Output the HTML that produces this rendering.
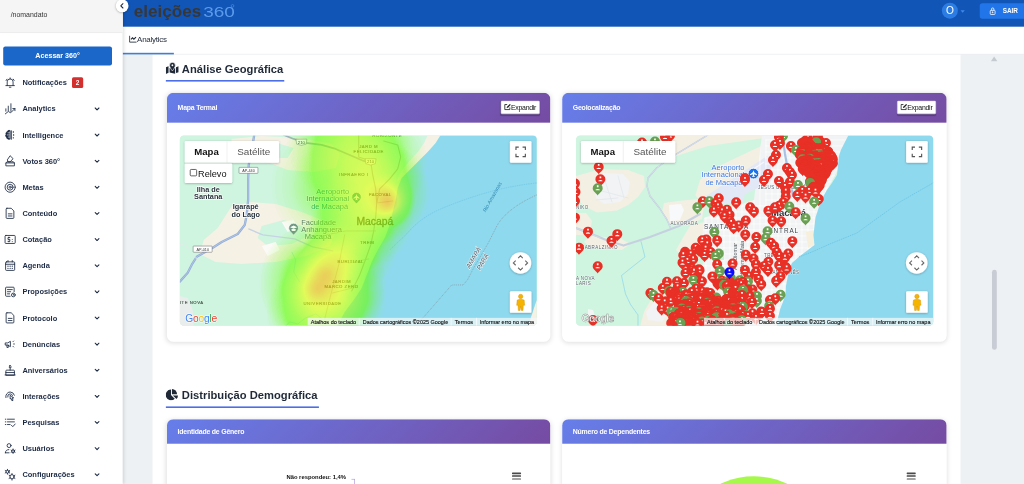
<!DOCTYPE html>
<html lang="pt-BR">
<head>
<meta charset="utf-8">
<title>Eleições 360 - Analytics</title>
<style>
*{box-sizing:border-box;margin:0;padding:0}
html,body{width:1024px;height:484px;overflow:hidden;background:#fff}
body{font-family:"Liberation Sans",Arial,sans-serif;color:#1f2937}
#root{position:absolute;left:0;top:0;width:1920px;height:908px;transform:scale(0.533333);transform-origin:0 0;overflow:hidden;background:#eef1f4}
/* sidebar */
#side{position:absolute;left:0;top:0;width:230px;height:908px;background:#fff;box-shadow:2px 0 6px rgba(0,0,0,.12);z-index:5}
#side .top{height:62px;background:#f5f5f5;border-bottom:1px solid #e4e4e4;font-size:13px;color:#333;padding:20px 0 0 20px}
#side .btn{position:absolute;left:6px;top:86.800px;width:204px;height:36px;background:#1b67c9;border-radius:4px;color:#fff;font-weight:700;font-size:13.400px;text-align:center;line-height:36px}
#side .it{position:absolute;left:0;width:230px;height:30px;font-size:14px;font-weight:700;color:#1c2a44;line-height:30px}
#side .it .tx{position:absolute;left:42px;top:0;white-space:nowrap}
#side .it svg.ic{position:absolute;left:7px;top:3px;width:24px;height:24px;fill:none;stroke:#1c2a44;stroke-width:1.6;stroke-linecap:round;stroke-linejoin:round}
#side .it svg.ch{position:absolute;left:176px;top:9px;width:12px;height:12px;fill:none;stroke:#1c2a44;stroke-width:2;stroke-linecap:round;stroke-linejoin:round}
#side .badge{position:absolute;left:135px;top:5px;width:21px;height:20px;background:#d32f2f;border-radius:3px;color:#fff;font-size:12px;line-height:20px;text-align:center}
#collapse{position:absolute;left:217px;top:-1px;width:24px;height:24px;border-radius:50%;background:#fff;box-shadow:0 1px 4px rgba(0,0,0,.3);z-index:9}
#collapse svg{position:absolute;left:6px;top:6px;width:12px;height:12px;fill:none;stroke:#1c2a44;stroke-width:2;stroke-linecap:round;stroke-linejoin:round}
/* header */
#hdr{position:absolute;left:230px;top:0;width:1690px;height:50px;background:#1155b7;z-index:2}
#logo{position:absolute;left:21px;top:0.500px;font-size:32px;font-weight:700;color:#373737;line-height:40px;white-space:nowrap}
#logo span{display:inline-block;color:#5b9bea;font-weight:400;font-size:28px;margin-left:4px;transform:scaleX(1.27);transform-origin:0 50%}
#logo i{position:absolute;left:182px;top:7.500px;width:6px;height:6px;border:1.200px solid #5b9bea;border-radius:50%}
#avatar{position:absolute;left:1536px;top:5px;width:30px;height:30px;border-radius:50%;background:#2b7de4;color:#fff;font-size:19px;text-align:center;line-height:31px}
#caret{position:absolute;left:1570.500px;top:19px;width:0;height:0;border-left:4px solid transparent;border-right:4px solid transparent;border-top:5px solid #3b8af0}
#sair{position:absolute;left:1607px;top:6px;width:90px;height:29px;border-radius:5px 0 0 5px;background:#2275e8;color:#fff;font-weight:700;font-size:12px;line-height:29px;padding-left:43px}
#sair svg{position:absolute;left:17px;top:6.500px;width:14.500px;height:15.500px;fill:none;stroke:#fff;stroke-width:1.6}
/* tabs */
#tabs{position:absolute;left:230px;top:50px;width:1690px;height:52px;background:#fff;border-bottom:1.500px solid #dfe3e8;z-index:1}
#tab{position:absolute;left:0;top:0;width:96px;height:52px;border-bottom:3px solid #3f7fd6;font-size:15px;color:#1f2937;letter-spacing:-0.5px;line-height:47px;padding-left:27px}
#tab svg{position:absolute;left:12px;top:16px;width:15px;height:15px;fill:none;stroke:#1f2937;stroke-width:1.6}
/* content */
#panel{position:absolute;left:286px;top:101px;width:1515px;height:820px;background:#fff}
.sec{position:absolute;left:25px;font-size:21px;font-weight:700;color:#1f2937;height:41px;line-height:34px;border-bottom:3px solid #4d6fe6;padding-left:30px;white-space:nowrap}
.sec svg{position:absolute;left:0;top:5px;width:26px;height:22px;fill:#1f2937}
.card{position:absolute;width:719px;background:#fff;border-radius:12px;box-shadow:0 2px 10px rgba(0,0,0,.13);overflow:hidden}
.card .ch{height:56px;background:linear-gradient(135deg,#667eea 0%,#764ba2 100%);color:#fff;font-size:13px;font-weight:700;line-height:57.500px;padding-left:20px;letter-spacing:-0.4px}
.exp{position:absolute;right:20px;top:15px;width:73px;height:25px;background:#fff;border:1px solid #d8d8e0;border-radius:2px;color:#111;font-size:13px;font-weight:400;line-height:23px;padding-left:18px;letter-spacing:-0.5px;box-shadow:0 2px 2px rgba(0,0,0,.25)}
.exp svg{position:absolute;left:5px;top:4px;width:13px;height:13px;fill:none;stroke:#222;stroke-width:1.6}
.map{position:absolute;left:24px;top:80px;width:670px;height:356.600px;border-radius:8px;overflow:hidden;background:#cdf3e0}
.card .ch.sm{height:46px;line-height:46px}
.lbl{position:absolute;font-size:11px;font-weight:700;color:#111;white-space:nowrap;line-height:14px}
.conn{position:absolute;left:346px;top:112px;width:6px;height:20px;border-top:1.500px solid #9a7fd6;border-right:1.500px solid #9a7fd6}
.hb{position:absolute;width:17px;height:14px}
.hb i{display:block;height:2.600px;background:#4a4a4a;margin-bottom:2.800px;border-radius:1px}
.pie{position:absolute;left:214px;top:107px;width:291px;height:291px;border-radius:50%;background:#a6f94b}
#sb{position:absolute;left:1859.500px;top:506px;width:9px;height:150px;border-radius:4.500px;background:#c8ccd4}
#sbt{position:absolute;left:1858px;top:106px;width:0;height:0;border-left:6px solid transparent;border-right:6px solid transparent;border-bottom:9px solid #c5cad1}
</style>
</head>
<body>
<div id="root">

<div id="hdr">
  <div id="logo">eleições<span>360</span><i></i></div>
  <div id="avatar">O</div><div id="caret"></div>
  <div id="sair"><svg viewBox="0 0 16 17"><rect x="3" y="7" width="10" height="8.5" rx="1.5"/><path d="M5.5 7V4.5a2.5 2.5 0 0 1 5 0V7"/><circle cx="8" cy="11" r="1" fill="#fff"/></svg>SAIR</div>
</div>

<div id="tabs">
  <div id="tab"><svg viewBox="0 0 15 15"><path d="M1 1v12h13"/><path d="M3.5 8l3-3 2.5 2.5 4-4" stroke-width="2"/></svg>Analytics</div>
</div>

<div id="panel">
  <div class="sec" style="top:11px;width:222px"><svg viewBox="0 0 24 22" style="width:24px;height:22px;top:4.500px"><path d="M0 8.900L5 7.300V19.300L0 21.700zM19 8.900L24 7.300V18.300L19 19.900zM7 10.500V19L17.400 21.300V10.500z"/><path d="M12.250 16C9.300 12.200 6.850 8.600 6.850 5.200A5.400 5.400 0 0 1 17.650 5.200C17.650 8.600 15.200 12.200 12.250 16z" stroke="#fff" stroke-width="1.200"/><circle cx="12.250" cy="5.300" r="1.700" fill="#fff"/></svg>Análise Geográfica</div>

  <div class="card" id="c1" style="left:27px;top:73px;height:467px">
    <div class="ch">Mapa Termal</div>
    <div class="exp"><svg viewBox="0 0 13 13"><path d="M11 7.500V11.500H1.500V2H6"/><path d="M5 8.500l.5-2.500L11 0.800l1.800 1.800L7.500 8z" fill="#222" stroke="none"/></svg>Expandir</div>
    <div class="map" id="m1"><svg width="670" height="356.600" viewBox="0 0 357.4 190.2" preserveAspectRatio="none" style="display:block"><defs>
<filter id="sh" x="-20%" y="-20%" width="140%" height="150%"><feDropShadow dx="0" dy="0.600" stdDeviation="0.900" flood-color="#000" flood-opacity="0.300"/></filter>
<filter id="heat" x="0" y="0" width="100%" height="100%" filterUnits="objectBoundingBox" color-interpolation-filters="sRGB">
<feColorMatrix type="matrix" values="0 0 0 1 0  0 0 0 1 0  0 0 0 1 0  0 0 0 1 0"/>
<feComponentTransfer>
<feFuncR type="table" tableValues="0.400 0.400 0.576 0.757 0.933 0.957 0.976 1 1 1 1"/>
<feFuncG type="table" tableValues="1 1 1 1 1 0.890 0.776 0.667 0.443 0.224 0"/>
<feFuncB type="table" tableValues="0 0 0 0 0 0 0 0 0 0 0"/>
<feFuncA type="table" tableValues="0 0.600 0.600 0.600 0.600 0.600 0.600 0.600 0.600 0.600 0.600"/>
</feComponentTransfer>
</filter>
<radialGradient id="hb"><stop offset="0" stop-color="#000" stop-opacity="1"/><stop offset="0.350" stop-color="#000" stop-opacity="0.620"/><stop offset="0.700" stop-color="#000" stop-opacity="0.180"/><stop offset="1" stop-color="#000" stop-opacity="0"/></radialGradient>
</defs><g transform="translate(-180.0,-135.5)"><rect x="180" y="135" width="358" height="192" fill="#cff5e0"/><g fill="#f5f1e5"><path d="M232 139l30-3 40 2 30 6 8 10-4 14-22 4-26-2-20-8-24-6-14-8z"/><path d="M232 206l20-4 24 2 26 8 20 8 14 12-6 14-24 10-30 6-34 2-26-2-16-8 4-14 14-12z"/><path d="M428 135h13l-5 8-8 9-8 8-10 10-8 8-5 4 4-10 9-11 9-10 6-9z"/><path d="M531 318l6-18v26h-9z"/></g><g fill="#cff5e0"><path d="M262 226l22-6 18 6 6 10-16 8-24 2-10-8z"/><path d="M250 146l24-4 20 6-6 10-24 0z"/></g><g fill="#e9eeec"><path d="M180 296l8 2 5 12 1 18h-14z"/><path d="M282 222l12-2 4 8-10 4z" fill="#fbfaf6"/><path d="M262 246l14-4 4 8-12 6z" fill="#fbfaf6"/></g><path d="M441 135L436 143 428 152 420 160 410 170 402 178 398 188 396 200 393 212 390 225 385 238 378 250 372 262 367 275 362 288 354 300 345 312 337 327H529L531 318 537 300V135z" fill="#8fd9ee"/><path d="M340 326l-6-8-10 2-8-6-10 4-8 6-8-2-10 10" fill="none" stroke="#9ddcf0" stroke-width="0.700"/><path d="M292 252l4 8-2 12 6 10" fill="none" stroke="#9ddcf0" stroke-width="0.600"/><g fill="none" stroke-linecap="round" stroke-linejoin="round"><path d="M254.500 135L252 150 249 165 248.400 180V200L247 215 245 225 238 234 222 242 213 247.700 197 256.800 192.700 263.600 188 272.700 180 281.800" stroke="#93add8" stroke-width="2.300"/><path d="M254.500 135L252 150 249 165 248.400 180V200L247 215 245 225 238 234 222 242 213 247.700 197 256.800 192.700 263.600 188 272.700 180 281.800" stroke="#c4d3ec" stroke-width="0.600"/><path d="M284 135l10 4 12 4 16 2 14 4 14 6 14 6 8 2" stroke="#9fb4bc" stroke-width="1.800"/><path d="M249 229l14 6 16 2 16 2 18 8 20 4" stroke="#c5d3e4" stroke-width="1.300"/><path d="M359 135v22l12 4M371 161l2 14 3 14 1 14-1 14-2 14-3 14-5 14-6 16-8 16" stroke="#a8b8ac" stroke-width="1.100"/><path d="M384 141l14 4 3 12-3 12-8 10-10 10-3 14" stroke="#a8b8ac" stroke-width="1.100"/><path d="M377 203l16-2M376 231h-30l-20 4M345 235l-6 30-8 30-6 24M369 259l-20 4M357 287l-24 6" stroke="#b4c2b6" stroke-width="0.800"/><path d="M188 245l-8 -8M200 262l-14 -16-6-2" stroke="#e4e8ea" stroke-width="0.800"/></g><path d="M537 183Q510 186 486 193T441 209T407 234L390 250" fill="none" stroke="#62bfe0" stroke-width="0.500" stroke-dasharray="1.500 0.800"/><path d="M537 195Q508 208 497.700 225L488.600 243 474 268 468 279.500 463.600 285H452L425 316 415 326" fill="none" stroke="#80858f" stroke-width="0.600" stroke-dasharray="0.900 1"/><g font-family="Liberation Sans, Arial, sans-serif" text-anchor="middle"><g font-size="7.300" font-weight="700" fill="#27323a" stroke="#fff" stroke-width="1.300" paint-order="stroke" stroke-linejoin="round"><text x="208.500" y="191.600">Ilha de</text><text x="208.500" y="199.200">Santana</text><text x="246" y="209">Igarapé</text><text x="246" y="216.600">do Lago</text></g><g font-size="7.500" fill="#0f7c8c" stroke="#fff" stroke-width="1.100" stroke-opacity="0.750" paint-order="stroke" text-anchor="end"><text x="349.500" y="194">Aeroporto</text><text x="349.500" y="201.500">Internacional</text><text x="348.500" y="208.800">de Macapá</text></g><g font-size="7.500" fill="#5c6a70" stroke="#fff" stroke-width="1.100" stroke-opacity="0.750" paint-order="stroke" text-anchor="start"><text x="301.500" y="224.600">Faculdade</text><text x="301.500" y="232.100">Anhanguera</text><text x="305" y="239.300">Macapá</text></g><text x="375.200" y="224.600" font-size="10.400" fill="#434f3c" stroke="#434f3c" stroke-width="0.300">Macapá</text><g font-size="4.300" fill="#4c5a50" stroke="#4c5a50" stroke-width="0.150" letter-spacing="0.500"><text x="387.500" y="137">HORIZONTE</text><text x="369" y="148.500">JARD M</text><text x="369" y="153.400">FELICIDADE</text><text x="354" y="176.500">INFRAERO I</text><text x="380.500" y="196.500">PACOVAL</text><text x="367.500" y="244">TREM</text><text x="351" y="263">BURITIZAL</text><text x="342" y="283.300">JARDIM</text><text x="341.800" y="288.300">MARCO ZERO</text><text x="322.800" y="305.500">UNIVERSIDADE</text><text x="192" y="304.200">ITE NOVA</text></g><text transform="translate(486,212.500) rotate(-61)" font-size="5.200" font-style="italic" fill="#2e86b0" text-anchor="start">Rio Amazonas</text><g font-size="6.600" font-style="italic" fill="#525a62" stroke="#fff" stroke-width="1" stroke-opacity="0.850" paint-order="stroke" text-anchor="start"><text transform="translate(470,269) rotate(-60)">AMAPÁ</text><text transform="translate(480.500,270.500) rotate(-60)">PARÁ</text></g></g><g><path d="M352 197.200a4.800 4.800 0 1 1 9.600 0c0 2.700-3 4.500-4.800 6.800-1.800-2.300-4.800-4.100-4.800-6.800z" fill="#2a9d8a" stroke="#fff" stroke-width="0.700"/><path transform="translate(356.800,197.200) scale(0.900)" d="M0-3.400L.7-1.200 3.400.8V1.700L.7.800.6 2.400 1.400 3V3.500L0 3.100-1.400 3.500V3L-.6 2.400-.7.800-3.400 1.700V.8L-.7-1.200z" fill="#fff"/><path d="M289 228.200a4.900 4.900 0 1 1 9.800 0c0 2.800-3 4.600-4.900 7-1.900-2.400-4.900-4.200-4.900-7z" fill="#71918c" stroke="#fff" stroke-width="0.700"/><path d="M290.400 227.200l3.500-1.600 3.500 1.600-3.500 1.600zM291.800 229v1.500q2.100 1.200 4.200 0V229" fill="#fff"/></g><g font-family="Liberation Sans, Arial, sans-serif" font-size="3.800" text-anchor="middle" fill="#333"><rect x="239.300" y="167.400" width="18.900" height="6" rx="0.600" fill="#fff" stroke="#555" stroke-width="0.450"/><text x="248.800" y="171.800">AP-440</text><rect x="193.400" y="246.100" width="19" height="6.200" rx="0.600" fill="#fff" stroke="#555" stroke-width="0.450"/><text x="203" y="250.600">AP-010</text><path d="M296.200 139.200h11l-.8 5q-4.700 2.400-9.400 0z" fill="#fff" stroke="#666" stroke-width="0.450"/><text x="301.700" y="143.600" font-size="4.300">210</text><path d="M365.400 158.800h11l-.8 5q-4.700 2.400-9.400 0z" fill="#fff" stroke="#666" stroke-width="0.450"/><text x="370.900" y="163.200" font-size="4.300">210</text></g><g filter="url(#heat)"><rect x="180" y="135" width="358" height="192" fill="#000" fill-opacity="0"/><circle cx="350" cy="140" r="64" fill="url(#hb)" fill-opacity="0.18"/><circle cx="368" cy="162" r="60" fill="url(#hb)" fill-opacity="0.2"/><circle cx="338" cy="185" r="68" fill="url(#hb)" fill-opacity="0.13"/><circle cx="378" cy="192" r="52" fill="url(#hb)" fill-opacity="0.24"/><circle cx="388" cy="201" r="28" fill="url(#hb)" fill-opacity="0.36"/><circle cx="388" cy="203" r="15" fill="url(#hb)" fill-opacity="0.34"/><circle cx="387" cy="194" r="14" fill="url(#hb)" fill-opacity="0.12"/><circle cx="362" cy="218" r="52" fill="url(#hb)" fill-opacity="0.2"/><circle cx="350" cy="246" r="48" fill="url(#hb)" fill-opacity="0.18"/><circle cx="338" cy="260" r="36" fill="url(#hb)" fill-opacity="0.18"/><circle cx="323" cy="283" r="64" fill="url(#hb)" fill-opacity="0.3"/><circle cx="328" cy="271" r="34" fill="url(#hb)" fill-opacity="0.26"/><circle cx="318" cy="289" r="34" fill="url(#hb)" fill-opacity="0.28"/><circle cx="325" cy="276" r="15" fill="url(#hb)" fill-opacity="0.22"/><circle cx="317" cy="289" r="15" fill="url(#hb)" fill-opacity="0.24"/><circle cx="316" cy="314" r="50" fill="url(#hb)" fill-opacity="0.2"/><circle cx="345" cy="300" r="42" fill="url(#hb)" fill-opacity="0.14"/></g></g><text x="5.500" y="186.200" font-family="Liberation Sans, Arial, sans-serif" font-size="10.300" font-weight="400" letter-spacing="-0.250" stroke="#fff" stroke-width="1.300" stroke-opacity="0.700" paint-order="stroke" stroke-linejoin="round"><tspan fill="#4285f4">G</tspan><tspan fill="#ea4335">o</tspan><tspan fill="#fbbc05">o</tspan><tspan fill="#4285f4">g</tspan><tspan fill="#34a853">l</tspan><tspan fill="#ea4335">e</tspan></text><g font-family="Liberation Sans, Arial, sans-serif"><rect x="5" y="5.600" width="94.300" height="21.600" rx="1.200" fill="#fff" filter="url(#sh)"/><line x1="47.300" y1="5.600" x2="47.300" y2="27.200" stroke="#e6e6e6" stroke-width="0.600"/><text x="26.800" y="20" font-size="9.600" font-weight="700" fill="#111" text-anchor="middle" textLength="24.500" lengthAdjust="spacingAndGlyphs">Mapa</text><text x="74" y="20" font-size="9.600" fill="#565656" text-anchor="middle" textLength="33" lengthAdjust="spacingAndGlyphs">Satélite</text><rect x="5" y="28" width="47.500" height="19.500" rx="1.200" fill="#fff" filter="url(#sh)"/><rect x="10.500" y="34" width="6.400" height="6.400" rx="1" fill="#fff" stroke="#222" stroke-width="0.700"/><text x="18.300" y="41.300" font-size="9.600" fill="#111" textLength="28.500" lengthAdjust="spacingAndGlyphs">Relevo</text><rect x="330.200" y="5.600" width="21.600" height="21.600" rx="1.200" fill="#fff" filter="url(#sh)"/><path d="M336.300 14.500v-2.800h2.800M342.900 11.700h2.800v2.800M345.700 18.400v2.800h-2.800M339.100 21.200h-2.800v-2.800" fill="none" stroke="#555" stroke-width="1.150"/><circle cx="340.800" cy="127.500" r="10.800" fill="#fff" filter="url(#sh)"/><path d="M338.500 122.700l2.300-2.300 2.300 2.300M338.500 132.300l2.300 2.300 2.300-2.300M336 125.200l-2.300 2.300 2.300 2.300M345.600 125.200l2.300 2.300-2.300 2.300" fill="none" stroke="#666" stroke-width="1.100"/><rect x="330.200" y="155.800" width="21.600" height="21.600" rx="1.200" fill="#fff" filter="url(#sh)"/><g fill="#f5b400" stroke="#d48e00" stroke-width="0.400"><circle cx="341" cy="161" r="2.200"/><path d="M337.500 164.600q3.500-1.600 7 0l.5 5.200h-1.300l-.4 5.200h-1.700l-.6-4.200-.6 4.200h-1.700l-.4-5.200h-1.300z"/></g><rect x="128" y="182.400" width="230" height="8" fill="#f5f8f8" fill-opacity="0.720"/><g font-size="5.300" fill="#111" stroke="#111" stroke-width="0.120"><text x="131" y="188.600" textLength="45.500" lengthAdjust="spacingAndGlyphs">Atalhos do teclado</text><text x="183" y="188.600" textLength="85.500" lengthAdjust="spacingAndGlyphs">Dados cartográficos ©2025 Google</text><text x="275" y="188.600" textLength="18.500" lengthAdjust="spacingAndGlyphs">Termos</text><text x="300" y="188.600" textLength="54.500" lengthAdjust="spacingAndGlyphs">Informar erro no mapa</text></g><g stroke="#fff" stroke-opacity="0.800" stroke-width="0.800"><line x1="179.500" y1="182.400" x2="179.500" y2="191"/><line x1="271.500" y1="182.400" x2="271.500" y2="191"/><line x1="296.800" y1="182.400" x2="296.800" y2="191"/></g></g></svg></div>
  </div>

  <div class="card" id="c2" style="left:768px;top:73px;height:467px;width:721px">
    <div class="ch">Geolocalização</div>
    <div class="exp"><svg viewBox="0 0 13 13"><path d="M11 7.500V11.500H1.500V2H6"/><path d="M5 8.500l.5-2.500L11 0.800l1.800 1.800L7.500 8z" fill="#222" stroke="none"/></svg>Expandir</div>
    <div class="map" id="m2" style="left:26px"><svg width="670" height="356.600" viewBox="0 0 357.4 190.2" preserveAspectRatio="none" style="display:block"><defs>
<path id="pp" d="M0 7.200C-.900 5-5 3.600-5 0A5 5 0 0 1 5 0C5 3.600.900 5 0 7.200z"/>
<g id="pn"><use href="#pp"/><path d="M-.850-2.900h1.700v1.800h-1.700zM-2.050 2v-.65q2.050-1.300 4.100 0V2z" fill="#fff"/></g>
<clipPath id="cu"><path d="M762 135h88l-9 15-3 20-11 20-8 17-5 28 1 10-14 11-11 14-4 24-8 24-1 8H690l-2-20 6-24 10-20 -2-22 2-22 20-8 30-10z"/></clipPath>
</defs><g transform="translate(-576.0,-135.5)"><rect x="576" y="135" width="358" height="192" fill="#cff5e0"/><g fill="#f4efe3"><path d="M576 176L601 169 628 170 644 176 645 187 638 197 628 205 617 210.500 597 212.500 584 206 576 197z"/><path d="M576 213h10l6 8-2 10-8 4h-6z"/><path d="M672 135H790V160L760 168 745 176 700 200 690 190 672 160z"/><path d="M676 156L708 146 764 138 766 144 740 156 715 168 700 180 694 200 668 202 652 196 648 182 656 168z" fill="#cff5e0"/><path d="M664 203l14-2 20-2 6 6-2 14-14 6-18-2-8-10z"/><path d="M640 327l4-15 8-14 8-10 10-6 6 6-8 39z"/><path d="M690 226l14-4 0 14-10 12-12 8-6-6 8-14z"/><path d="M590 236l30 2 10 6-8 6-30-2-8-6z"/></g><g fill="#f1f3f4"><path d="M603 173l20 1 7 8-2 12-8 8-16 2-8-6-2-14z"/><path d="M669 205l12-1 3 6-4 10-10 1z" fill="#f8f9fa"/><path d="M762 135h88l-9 15-3 20-11 20-8 17-5 28 1 10-14 11-11 14-4 24-8 24-1 8H690l-2-20 6-24 10-20 -2-22 2-22 20-8 30-10z"/><path d="M588 309l5 1 3 9-8 1z" fill="#f3f5f5"/><path d="M646 312l10-12 8 2 2 14-4 6-14-2z" fill="#f1f3f4"/></g><path d="M700 200L767 156 772 160V178L762 186 745 194 742 204H715z" fill="#e3e8f6"/><path d="M741 177.500l23-15.500" stroke="#f7f8fd" stroke-width="1.200" fill="none"/><path d="M700 200V327M706 200V327M712 200V327M718 200V327M724 200V327M730 200V327M736 200V327M742 200V327M748 200V327M754 200V327M760 140V327M766 140V327M772 140V327M778 140V327M784 140V327M790 140V327M796 140V327M802 140V327M808 140V327M814 140V327M820 140V327M826 140V327M765 140H850M765 146H850M765 152H850M765 158H850M765 164H850M765 170H850M765 176H850M765 182H850M765 188H850M765 194H850M765 200H850M700 206H850M700 212H850M700 218H850M700 224H850M700 230H850M700 236H850M700 242H850M700 248H850M700 254H850M700 260H850M700 266H850M700 272H850M700 278H850M700 284H850M700 290H850M700 296H850M700 302H850M700 308H850M700 314H850M700 320H850M700 326H850" stroke="#fff" stroke-width="0.700" fill="none" clip-path="url(#cu)"/><path d="M716 250l8 0 0 10-8 0z" fill="#cdeed8"/><path d="M806 232l8-2 1 14-7 4z" fill="#f6efdc"/><path d="M848.600 135L845 142 841 150 839 156 838 166 837 175 832 183 827 190 823 197 819 207 815.500 217.600 813.500 235 814.500 245 808 250 800 256 792 263 789 270 787.600 277.600 786 286 785.600 294 783 302 780.400 308.600 778 318 777 327H934V135z" fill="#8fd9ee"/><path d="M934 182.500L900 202 875 220 857 233 830 244 812 252 799 257" fill="none" stroke="#5bbce0" stroke-width="0.600" stroke-dasharray="1.500 0.900"/><g fill="none" stroke-linecap="round" stroke-linejoin="round"><path d="M708 135L690 146 670 158 656.600 168 648 178 647 186 650 196 658.600 207 667 219.700 671 229" stroke="#b9c6da" stroke-width="1.400"/><path d="M708 135L690 146 670 158 656.600 168 648 178 647 186 650 196 658.600 207 667 219.700 671 229" stroke="#f3f6fa" stroke-width="0.500"/><path d="M700 214L679 226 650 237 623.500 245.600 606 240 596.700 236 576 228" stroke="#c6d1e0" stroke-width="2.200"/><path d="M783 140l2 14 3 16 3 14 2 12" stroke="#a9c1e4" stroke-width="2.200"/><path d="M576 228l10 4 14 6" stroke="#d5dbe3" stroke-width="1"/><path d="M641 241.500l4 15.500-9 7-14.500 11.600 4 18.400 5 10.500 7.500 10.500V327" stroke="#7fd0ee" stroke-width="0.600"/><path d="M598 190l30 8M604 178l8 24M618 176l6 22M596 200l22-2" stroke="#dfe4ea" stroke-width="0.600"/></g><g font-family="Liberation Sans, Arial, sans-serif"><g font-size="7.500" fill="#3b76e0" stroke="#fff" stroke-width="1.100" stroke-opacity="0.800" paint-order="stroke" text-anchor="end"><text x="744.500" y="169.800">Aeroporto</text><text x="744.500" y="177.200">Internacional</text><text x="742.500" y="184.600">de Macapá</text></g><circle cx="753.500" cy="173.600" r="5.400" fill="#1a73e8" stroke="#fff" stroke-width="0.900"/><path transform="translate(753.500,173.600)" d="M0-3.400L.7-1.200 3.400.8V1.700L.7.800.6 2.400 1.400 3V3.500L0 3.100-1.400 3.500V3L-.6 2.400-.7.800-3.400 1.700V.8L-.7-1.200z" fill="#fff"/><g font-size="4.500" fill="#565f67" letter-spacing="0.450" stroke="#fff" stroke-width="0.700" stroke-opacity="0.800" paint-order="stroke"><text x="670.500" y="225">ALVORADA</text><text x="581" y="248.800">CABRALZINHO</text><text x="576" y="280.200">A NOVA</text><text x="576" y="285">LARIS</text><text x="576" y="208.800">NIKO</text><text x="758" y="188.600">JESUS DE NAZARÉ</text><text x="764" y="256.600">TREM</text><text x="769" y="274.500">SANTA INÊS</text></g><g font-size="6.400" fill="#3c434a" letter-spacing="0.900" stroke="#fff" stroke-width="0.900" stroke-opacity="0.850" paint-order="stroke"><text x="704" y="228.800">SANTA RITA</text><text x="763" y="232.800">CENTRAL</text></g><text x="771" y="215.800" font-size="9.600" font-weight="700" fill="#2c3238" stroke="#fff" stroke-width="1" stroke-opacity="0.800" paint-order="stroke">Macapá</text><g font-size="5.600" fill="#4a5158"><text transform="translate(744,284) rotate(-90)">R. Hildemar Maia</text><text transform="translate(737,270) rotate(-90)">Av. Diomar</text></g></g><g><use href="#pn" x="670" y="135.5" fill="#e83026"/><use href="#pn" x="783" y="136" fill="#6aa052"/><use href="#pn" x="818" y="136" fill="#e83026"/><use href="#pn" x="665" y="137" fill="#e83026"/><use href="#pn" x="779" y="137" fill="#e83026"/><use href="#pn" x="808" y="138" fill="#e83026"/><use href="#pp" x="805" y="141.1" fill="#e83026"/><use href="#pp" x="816.4" y="141.2" fill="#e83026"/><use href="#pn" x="655" y="141.5" fill="#6aa052"/><use href="#pp" x="820.3" y="141.5" fill="#e83026"/><use href="#pp" x="819.2" y="141.6" fill="#e83026"/><use href="#pp" x="807.9" y="141.8" fill="#e83026"/><use href="#pp" x="817.6" y="141.9" fill="#e83026"/><use href="#pp" x="809.9" y="142.1" fill="#e83026"/><use href="#pp" x="816.3" y="142.2" fill="#6aa052"/><use href="#pn" x="642" y="142.5" fill="#e83026"/><use href="#pp" x="807.2" y="142.6" fill="#e83026"/><use href="#pp" x="807.1" y="142.7" fill="#e83026"/><use href="#pn" x="780" y="143" fill="#e83026"/><use href="#pn" x="802" y="143" fill="#e83026"/><use href="#pn" x="826" y="143" fill="#e83026"/><use href="#pp" x="809.2" y="143.4" fill="#e83026"/><use href="#pp" x="804" y="143.6" fill="#e83026"/><use href="#pn" x="775" y="145" fill="#e83026"/><use href="#pp" x="811.1" y="145.6" fill="#e83026"/><use href="#pn" x="791" y="146" fill="#e83026"/><use href="#pp" x="805" y="146.9" fill="#e83026"/><use href="#pn" x="811.9" y="147.1" fill="#e83026"/><use href="#pp" x="808.6" y="147.5" fill="#e83026"/><use href="#pp" x="808.5" y="147.5" fill="#e83026"/><use href="#pp" x="815" y="148" fill="#e83026"/><use href="#pn" x="822.4" y="148.1" fill="#e83026"/><use href="#pp" x="817.8" y="148.3" fill="#e83026"/><use href="#pp" x="820.8" y="148.4" fill="#e83026"/><use href="#pp" x="810.5" y="148.5" fill="#e83026"/><use href="#pp" x="802.9" y="148.7" fill="#e83026"/><use href="#pp" x="806.4" y="149.1" fill="#e83026"/><use href="#pp" x="802.9" y="149.1" fill="#e83026"/><use href="#pp" x="804.9" y="149.1" fill="#e83026"/><use href="#pp" x="808.1" y="149.2" fill="#e83026"/><use href="#pp" x="824.7" y="149.5" fill="#e83026"/><use href="#pp" x="816.8" y="149.9" fill="#e83026"/><use href="#pn" x="796" y="150" fill="#6aa052"/><use href="#pp" x="816.6" y="150.4" fill="#e83026"/><use href="#pp" x="823.2" y="150.9" fill="#e83026"/><use href="#pp" x="806" y="151.2" fill="#e83026"/><use href="#pp" x="801.1" y="151.3" fill="#e83026"/><use href="#pn" x="824.9" y="151.3" fill="#e83026"/><use href="#pp" x="816.9" y="151.3" fill="#e83026"/><use href="#pp" x="828.3" y="151.6" fill="#e83026"/><use href="#pn" x="816.6" y="152" fill="#e83026"/><use href="#pp" x="828.1" y="152.5" fill="#e83026"/><use href="#pp" x="810.2" y="152.5" fill="#e83026"/><use href="#pp" x="805.3" y="152.6" fill="#e83026"/><use href="#pp" x="809.8" y="152.6" fill="#e83026"/><use href="#pp" x="809" y="153.1" fill="#e83026"/><use href="#pp" x="803.6" y="153.4" fill="#e83026"/><use href="#pp" x="808.6" y="153.4" fill="#e83026"/><use href="#pp" x="825.2" y="153.6" fill="#e83026"/><use href="#pp" x="820.9" y="153.6" fill="#e83026"/><use href="#pp" x="804.2" y="153.7" fill="#e83026"/><use href="#pn" x="808.3" y="153.8" fill="#e83026"/><use href="#pp" x="828.1" y="153.9" fill="#e83026"/><use href="#pn" x="813.9" y="153.9" fill="#e83026"/><use href="#pp" x="819.9" y="154.1" fill="#6aa052"/><use href="#pp" x="811.2" y="154.2" fill="#e83026"/><use href="#pp" x="802.7" y="154.3" fill="#6aa052"/><use href="#pp" x="807.9" y="154.3" fill="#e83026"/><use href="#pn" x="815" y="154.4" fill="#e83026"/><use href="#pp" x="825.3" y="154.8" fill="#e83026"/><use href="#pp" x="801.2" y="154.9" fill="#e83026"/><use href="#pp" x="815.4" y="154.9" fill="#6aa052"/><use href="#pn" x="776" y="155" fill="#e83026"/><use href="#pp" x="800" y="155" fill="#e83026"/><use href="#pp" x="827.7" y="155" fill="#e83026"/><use href="#pp" x="828.2" y="155.2" fill="#e83026"/><use href="#pp" x="824.9" y="155.4" fill="#e83026"/><use href="#pp" x="815.4" y="155.4" fill="#e83026"/><use href="#pp" x="829.5" y="155.5" fill="#e83026"/><use href="#pp" x="831" y="155.5" fill="#e83026"/><use href="#pp" x="828.1" y="155.5" fill="#e83026"/><use href="#pp" x="821.3" y="155.6" fill="#e83026"/><use href="#pp" x="812.8" y="155.9" fill="#e83026"/><use href="#pp" x="822.3" y="156" fill="#e83026"/><use href="#pp" x="815" y="156.1" fill="#e83026"/><use href="#pp" x="806.8" y="156.1" fill="#e83026"/><use href="#pp" x="820.6" y="156.1" fill="#6aa052"/><use href="#pp" x="821.9" y="156.2" fill="#e83026"/><use href="#pp" x="810.1" y="156.3" fill="#e83026"/><use href="#pp" x="805.9" y="156.9" fill="#e83026"/><use href="#pp" x="816.7" y="156.9" fill="#e83026"/><use href="#pp" x="816.2" y="157.1" fill="#e83026"/><use href="#pp" x="812.8" y="157.3" fill="#e83026"/><use href="#pp" x="809.7" y="157.4" fill="#e83026"/><use href="#pp" x="806.3" y="157.4" fill="#e83026"/><use href="#pn" x="832.1" y="157.5" fill="#e83026"/><use href="#pp" x="813.4" y="157.5" fill="#e83026"/><use href="#pp" x="827.8" y="157.7" fill="#e83026"/><use href="#pn" x="815.1" y="158" fill="#e83026"/><use href="#pp" x="815.8" y="158.2" fill="#e83026"/><use href="#pp" x="812.2" y="158.2" fill="#e83026"/><use href="#pp" x="827.2" y="158.2" fill="#e83026"/><use href="#pp" x="813.4" y="158.4" fill="#e83026"/><use href="#pp" x="814.1" y="158.5" fill="#e83026"/><use href="#pp" x="810" y="158.8" fill="#6aa052"/><use href="#pp" x="804.1" y="158.8" fill="#e83026"/><use href="#pp" x="802.6" y="159.2" fill="#6aa052"/><use href="#pp" x="832.9" y="159.2" fill="#e83026"/><use href="#pp" x="818" y="159.3" fill="#e83026"/><use href="#pp" x="808.3" y="159.3" fill="#e83026"/><use href="#pp" x="821.7" y="159.6" fill="#e83026"/><use href="#pp" x="816.7" y="159.6" fill="#e83026"/><use href="#pp" x="819.4" y="159.8" fill="#e83026"/><use href="#pn" x="818.6" y="159.8" fill="#e83026"/><use href="#pp" x="822.6" y="159.9" fill="#e83026"/><use href="#pn" x="773" y="160" fill="#e83026"/><use href="#pp" x="816.5" y="160.1" fill="#e83026"/><use href="#pp" x="804.8" y="160.5" fill="#e83026"/><use href="#pn" x="804.2" y="160.7" fill="#e83026"/><use href="#pp" x="819.5" y="160.8" fill="#e83026"/><use href="#pp" x="812.9" y="160.9" fill="#e83026"/><use href="#pp" x="808.2" y="160.9" fill="#e83026"/><use href="#pp" x="802.2" y="161" fill="#e83026"/><use href="#pp" x="818.3" y="161.2" fill="#e83026"/><use href="#pp" x="828.1" y="161.2" fill="#e83026"/><use href="#pp" x="816.6" y="161.3" fill="#e83026"/><use href="#pp" x="828" y="161.6" fill="#e83026"/><use href="#pp" x="808.9" y="161.8" fill="#e83026"/><use href="#pp" x="808.9" y="162" fill="#e83026"/><use href="#pn" x="823.4" y="162.3" fill="#e83026"/><use href="#pp" x="811.8" y="162.4" fill="#e83026"/><use href="#pp" x="804.7" y="162.6" fill="#e83026"/><use href="#pp" x="828.1" y="162.6" fill="#e83026"/><use href="#pp" x="800.3" y="162.7" fill="#e83026"/><use href="#pp" x="806.5" y="162.9" fill="#e83026"/><use href="#pp" x="818.7" y="163" fill="#6aa052"/><use href="#pp" x="803.3" y="163.1" fill="#e83026"/><use href="#pp" x="831.4" y="163.2" fill="#e83026"/><use href="#pp" x="815.1" y="163.2" fill="#6aa052"/><use href="#pn" x="804.6" y="163.3" fill="#e83026"/><use href="#pn" x="833" y="163.4" fill="#e83026"/><use href="#pp" x="822.2" y="163.4" fill="#e83026"/><use href="#pp" x="801.9" y="163.5" fill="#e83026"/><use href="#pp" x="825" y="163.5" fill="#e83026"/><use href="#pp" x="811.6" y="163.9" fill="#e83026"/><use href="#pp" x="817.3" y="164.2" fill="#e83026"/><use href="#pp" x="804.3" y="164.2" fill="#e83026"/><use href="#pp" x="809.3" y="164.3" fill="#e83026"/><use href="#pp" x="805.1" y="164.7" fill="#e83026"/><use href="#pp" x="805.7" y="164.7" fill="#e83026"/><use href="#pp" x="830.8" y="164.7" fill="#e83026"/><use href="#pp" x="830.4" y="164.8" fill="#e83026"/><use href="#pp" x="825.6" y="164.9" fill="#e83026"/><use href="#pp" x="828.8" y="165" fill="#e83026"/><use href="#pp" x="813" y="165.1" fill="#e83026"/><use href="#pp" x="815.5" y="165.2" fill="#e83026"/><use href="#pp" x="813.1" y="165.4" fill="#e83026"/><use href="#pp" x="806.1" y="165.9" fill="#e83026"/><use href="#pp" x="815.8" y="166.1" fill="#e83026"/><use href="#pn" x="813" y="166.3" fill="#e83026"/><use href="#pp" x="826.4" y="166.4" fill="#e83026"/><use href="#pp" x="828.1" y="166.4" fill="#e83026"/><use href="#pp" x="824.5" y="166.4" fill="#e83026"/><use href="#pp" x="813.7" y="166.5" fill="#e83026"/><use href="#pp" x="819.2" y="166.5" fill="#e83026"/><use href="#pn" x="821.1" y="166.6" fill="#e83026"/><use href="#pp" x="807" y="166.9" fill="#e83026"/><use href="#pp" x="810.6" y="166.9" fill="#e83026"/><use href="#pn" x="598.7" y="167" fill="#e83026"/><use href="#pp" x="811.4" y="167" fill="#e83026"/><use href="#pp" x="803.9" y="167.2" fill="#e83026"/><use href="#pp" x="813.7" y="167.2" fill="#e83026"/><use href="#pp" x="814.3" y="167.5" fill="#e83026"/><use href="#pp" x="816.9" y="167.8" fill="#e83026"/><use href="#pn" x="787" y="168" fill="#e83026"/><use href="#pp" x="811.4" y="168.4" fill="#e83026"/><use href="#pp" x="819.1" y="168.6" fill="#e83026"/><use href="#pp" x="802.8" y="169" fill="#e83026"/><use href="#pp" x="827.7" y="169" fill="#e83026"/><use href="#pp" x="812.1" y="169.3" fill="#e83026"/><use href="#pp" x="807.7" y="169.7" fill="#e83026"/><use href="#pp" x="826.1" y="169.7" fill="#e83026"/><use href="#pp" x="806.5" y="170.1" fill="#e83026"/><use href="#pp" x="817.6" y="170.1" fill="#e83026"/><use href="#pp" x="819.7" y="170.2" fill="#e83026"/><use href="#pp" x="810.2" y="170.3" fill="#e83026"/><use href="#pp" x="807.5" y="170.3" fill="#e83026"/><use href="#pp" x="823.7" y="170.7" fill="#e83026"/><use href="#pp" x="810.1" y="171.5" fill="#e83026"/><use href="#pp" x="826.2" y="171.8" fill="#e83026"/><use href="#pp" x="817.3" y="171.9" fill="#e83026"/><use href="#pn" x="790" y="172" fill="#e83026"/><use href="#pp" x="818.8" y="172.4" fill="#e83026"/><use href="#pp" x="816.9" y="172.5" fill="#e83026"/><use href="#pp" x="808.3" y="172.6" fill="#e83026"/><use href="#pp" x="824.7" y="173.2" fill="#e83026"/><use href="#pp" x="810" y="173.3" fill="#e83026"/><use href="#pp" x="822.8" y="173.3" fill="#e83026"/><use href="#pp" x="825.6" y="173.9" fill="#e83026"/><use href="#pn" x="768" y="174" fill="#e83026"/><use href="#pp" x="815.8" y="174.2" fill="#e83026"/><use href="#pp" x="814.1" y="174.4" fill="#e83026"/><use href="#pn" x="822.8" y="174.4" fill="#e83026"/><use href="#pp" x="815.8" y="174.6" fill="#e83026"/><use href="#pp" x="814.4" y="174.6" fill="#e83026"/><use href="#pn" x="792" y="175" fill="#e83026"/><use href="#pp" x="813.9" y="175.4" fill="#e83026"/><use href="#pp" x="817.2" y="175.6" fill="#e83026"/><use href="#pp" x="822.9" y="175.6" fill="#e83026"/><use href="#pp" x="821.6" y="175.9" fill="#e83026"/><use href="#pp" x="819.3" y="176" fill="#e83026"/><use href="#pp" x="821.4" y="176.9" fill="#e83026"/><use href="#pp" x="820.3" y="177.3" fill="#e83026"/><use href="#pp" x="816.6" y="177.6" fill="#e83026"/><use href="#pp" x="817.1" y="177.8" fill="#e83026"/><use href="#pn" x="745" y="178" fill="#e83026"/><use href="#pp" x="813.8" y="178.9" fill="#e83026"/><use href="#pp" x="822" y="179.2" fill="#e83026"/><use href="#pn" x="600.4" y="179.4" fill="#e83026"/><use href="#pn" x="745" y="180" fill="#e83026"/><use href="#pn" x="764" y="180" fill="#e83026"/><use href="#pp" x="817.9" y="180" fill="#e83026"/><use href="#pn" x="779" y="181" fill="#e83026"/><use href="#pp" x="810.8" y="181" fill="#e83026"/><use href="#pp" x="821.5" y="181.1" fill="#e83026"/><use href="#pp" x="810" y="181.8" fill="#e83026"/><use href="#pn" x="790" y="182" fill="#e83026"/><use href="#pp" x="811.7" y="182.1" fill="#e83026"/><use href="#pp" x="814.1" y="182.3" fill="#e83026"/><use href="#pp" x="811.2" y="182.6" fill="#e83026"/><use href="#pp" x="810.2" y="183" fill="#6aa052"/><use href="#pn" x="575" y="183.5" fill="#e83026"/><use href="#pn" x="798" y="185" fill="#6aa052"/><use href="#pp" x="819.2" y="185.4" fill="#e83026"/><use href="#pp" x="819.7" y="185.6" fill="#e83026"/><use href="#pp" x="813.9" y="186.9" fill="#e83026"/><use href="#pn" x="785" y="187" fill="#e83026"/><use href="#pp" x="812.9" y="187.3" fill="#e83026"/><use href="#pp" x="817.7" y="187.7" fill="#e83026"/><use href="#pp" x="816" y="188.1" fill="#e83026"/><use href="#pn" x="597.7" y="188.3" fill="#6aa052"/><use href="#pn" x="809" y="191" fill="#e83026"/><use href="#pn" x="802.3" y="191" fill="#e83026"/><use href="#pn" x="785.8" y="191.6" fill="#e83026"/><use href="#pn" x="815.5" y="191.6" fill="#e83026"/><use href="#pn" x="575.5" y="192" fill="#e83026"/><use href="#pn" x="797.4" y="195" fill="#e83026"/><use href="#pn" x="785.8" y="196.6" fill="#e83026"/><use href="#pn" x="805.6" y="196.6" fill="#e83026"/><use href="#pn" x="718.8" y="198.3" fill="#e83026"/><use href="#pn" x="818.8" y="199.1" fill="#e83026"/><use href="#pn" x="575" y="201" fill="#e83026"/><use href="#pn" x="702.8" y="201.2" fill="#e83026"/><use href="#pn" x="709.4" y="201.2" fill="#6aa052"/><use href="#pn" x="814.2" y="201.9" fill="#6aa052"/><use href="#pn" x="736.2" y="202.4" fill="#e83026"/><use href="#pn" x="783.3" y="202.4" fill="#e83026"/><use href="#pn" x="715.5" y="203.2" fill="#e83026"/><use href="#pn" x="779.2" y="205.7" fill="#e83026"/><use href="#pn" x="718" y="206.5" fill="#e83026"/><use href="#pn" x="789.4" y="206.5" fill="#6aa052"/><use href="#pn" x="697.4" y="207.4" fill="#6aa052"/><use href="#pn" x="750.2" y="207.4" fill="#e83026"/><use href="#pn" x="775" y="207.4" fill="#e83026"/><use href="#pn" x="727" y="209.8" fill="#e83026"/><use href="#pn" x="713.9" y="210.7" fill="#e83026"/><use href="#pn" x="768.4" y="210.7" fill="#e83026"/><use href="#pn" x="754" y="211.2" fill="#e83026"/><use href="#pn" x="722" y="211.5" fill="#e83026"/><use href="#pn" x="795.7" y="212.3" fill="#e83026"/><use href="#pn" x="729.6" y="214.8" fill="#e83026"/><use href="#pn" x="724.6" y="216.4" fill="#e83026"/><use href="#pn" x="575" y="217.6" fill="#e83026"/><use href="#pn" x="805.6" y="218.4" fill="#6aa052"/><use href="#pn" x="729.6" y="220.6" fill="#e83026"/><use href="#pn" x="745.8" y="220.6" fill="#e83026"/><use href="#pn" x="772.6" y="220.6" fill="#e83026"/><use href="#pn" x="781.2" y="221.4" fill="#e83026"/><use href="#pn" x="731.2" y="223" fill="#e83026"/><use href="#pn" x="738.7" y="225.5" fill="#e83026"/><use href="#pn" x="733.7" y="227.2" fill="#e83026"/><use href="#pn" x="767.6" y="231.3" fill="#6aa052"/><use href="#pn" x="588" y="231.7" fill="#e83026"/><use href="#pn" x="714.4" y="232.1" fill="#6aa052"/><use href="#pn" x="617.3" y="234.2" fill="#e83026"/><use href="#pn" x="745.3" y="234.6" fill="#e83026"/><use href="#pn" x="756.4" y="237.1" fill="#e83026"/><use href="#pn" x="765.6" y="238.3" fill="#6aa052"/><use href="#pn" x="706.4" y="239.6" fill="#e83026"/><use href="#pn" x="717.2" y="240.4" fill="#e83026"/><use href="#pn" x="702.3" y="240.4" fill="#e83026"/><use href="#pn" x="611.5" y="240.9" fill="#e83026"/><use href="#pn" x="792.4" y="241.2" fill="#e83026"/><use href="#pn" x="770.9" y="242.9" fill="#e83026"/><use href="#pn" x="707.3" y="244.5" fill="#e83026"/><use href="#pn" x="774.2" y="246.2" fill="#e83026"/><use href="#pn" x="755.2" y="247" fill="#e83026"/><use href="#pn" x="579" y="247.7" fill="#e83026"/><use href="#pn" x="695.7" y="247.9" fill="#e83026"/><use href="#pn" x="705.6" y="248.7" fill="#e83026"/><use href="#pp" x="699.2" y="250" fill="#e83026"/><use href="#pp" x="685.1" y="251.9" fill="#e83026"/><use href="#pn" x="776.7" y="252" fill="#e83026"/><use href="#pn" x="710.6" y="252" fill="#e83026"/><use href="#pn" x="788.3" y="253.6" fill="#e83026"/><use href="#pn" x="718.8" y="253.6" fill="#6aa052"/><use href="#pn" x="690.7" y="254.5" fill="#e83026"/><use href="#pn" x="745.8" y="254.8" fill="#e83026"/><use href="#pn" x="704.6" y="255" fill="#e83026"/><use href="#pn" x="683.3" y="255.3" fill="#e83026"/><use href="#pn" x="779.2" y="256" fill="#e83026"/><use href="#pn" x="715.5" y="256" fill="#6aa052"/><use href="#pn" x="785" y="257.8" fill="#e83026"/><use href="#pn" x="753.6" y="258.6" fill="#e83026"/><use href="#pn" x="693.2" y="259.4" fill="#e83026"/><use href="#pn" x="687.4" y="261" fill="#e83026"/><use href="#pn" x="768.4" y="261.9" fill="#e83026"/><use href="#pn" x="682.5" y="262.7" fill="#e83026"/><use href="#pn" x="732.6" y="263.6" fill="#e83026"/><use href="#pn" x="756" y="264.4" fill="#e83026"/><use href="#pn" x="717.2" y="264.4" fill="#e83026"/><use href="#pn" x="779.2" y="265.2" fill="#e83026"/><use href="#pn" x="764.3" y="266" fill="#e83026"/><use href="#pn" x="597.7" y="266.3" fill="#e83026"/><use href="#pn" x="785.8" y="267" fill="#e83026"/><use href="#pn" x="691.8" y="268.5" fill="#e83026"/><use href="#pn" x="786.7" y="268.5" fill="#e83026"/><use href="#pn" x="698.9" y="269.3" fill="#e83026"/><use href="#pn" x="745" y="270" fill="#e83026"/><use href="#pn" x="768" y="270" fill="#e83026"/><use href="#pn" x="691.7" y="270.4" fill="#e83026"/><use href="#pn" x="699.6" y="270.4" fill="#e83026"/><use href="#pn" x="720" y="271" fill="#6aa052"/><use href="#pn" x="694" y="271.8" fill="#e83026"/><use href="#pn" x="719.6" y="271.9" fill="#6aa052"/><use href="#pn" x="756" y="272" fill="#e83026"/><use href="#pn" x="685.5" y="273" fill="#e83026"/><use href="#pn" x="780.6" y="276.4" fill="#e83026"/><use href="#pn" x="749" y="276.4" fill="#e83026"/><use href="#pn" x="712.4" y="276.6" fill="#e83026"/><use href="#pp" x="697.1" y="276.8" fill="#e83026"/><use href="#pn" x="730.8" y="278.1" fill="#6aa052"/><use href="#pn" x="758.6" y="279" fill="#e83026"/><use href="#pn" x="693.4" y="280" fill="#6aa052"/><use href="#pn" x="739.9" y="280.4" fill="#6aa052"/><use href="#pn" x="776.2" y="280.8" fill="#e83026"/><use href="#pn" x="722.2" y="280.8" fill="#e83026"/><use href="#pn" x="702" y="281.4" fill="#e83026"/><use href="#pn" x="677" y="281.4" fill="#e83026"/><use href="#pn" x="727.8" y="281.4" fill="#6aa052"/><use href="#pn" x="748" y="281.6" fill="#6aa052"/><use href="#pn" x="667" y="281.8" fill="#e83026"/><use href="#pp" x="730" y="281.9" fill="#e83026"/><use href="#pn" x="742.6" y="282" fill="#e83026"/><use href="#pn" x="742.8" y="282.3" fill="#e83026"/><use href="#pn" x="721" y="282.6" fill="#6aa052"/><use href="#pn" x="684" y="283" fill="#e83026"/><use href="#pn" x="738.4" y="283.4" fill="#e83026"/><use href="#pn" x="722.6" y="283.4" fill="#e83026"/><use href="#pp" x="717.5" y="283.5" fill="#e83026"/><use href="#pn" x="761.3" y="284.3" fill="#e83026"/><use href="#pn" x="741.2" y="284.4" fill="#e83026"/><use href="#pn" x="724" y="285" fill="#6aa052"/><use href="#pn" x="726.7" y="285.7" fill="#e83026"/><use href="#pn" x="677.6" y="287.5" fill="#e83026"/><use href="#pn" x="743.7" y="287.8" fill="#e83026"/><use href="#pn" x="662.8" y="288" fill="#e83026"/><use href="#pp" x="729.7" y="288" fill="#e83026"/><use href="#pn" x="696.2" y="288.7" fill="#e83026"/><use href="#pn" x="735.5" y="289" fill="#e83026"/><use href="#pn" x="752.5" y="289.5" fill="#e83026"/><use href="#pp" x="747.9" y="289.7" fill="#e83026"/><use href="#pn" x="743" y="290" fill="#6aa052"/><use href="#pp" x="681.4" y="290.2" fill="#e83026"/><use href="#pn" x="669" y="291" fill="#6aa052"/><use href="#pp" x="682.1" y="291.6" fill="#e83026"/><use href="#pn" x="670.7" y="291.7" fill="#e83026"/><use href="#pn" x="702.2" y="291.8" fill="#e83026"/><use href="#pn" x="730.6" y="291.8" fill="#e83026"/><use href="#pn" x="728.2" y="291.9" fill="#6aa052"/><use href="#pn" x="682.9" y="292" fill="#6aa052"/><use href="#pn" x="691.8" y="292.1" fill="#e83026"/><use href="#pp" x="675.3" y="292.2" fill="#e83026"/><use href="#pp" x="706.9" y="292.4" fill="#e83026"/><use href="#pp" x="732.5" y="292.4" fill="#e83026"/><use href="#pn" x="650.4" y="293" fill="#e83026"/><use href="#pn" x="710.3" y="293" fill="#e83026"/><use href="#pp" x="743.9" y="293.1" fill="#6aa052"/><use href="#pp" x="671.2" y="294.3" fill="#e83026"/><use href="#pn" x="686.4" y="294.6" fill="#e83026"/><use href="#pn" x="780.6" y="294.8" fill="#6aa052"/><use href="#pn" x="653.5" y="295" fill="#6aa052"/><use href="#pn" x="742" y="295" fill="#e83026"/><use href="#pp" x="673.4" y="295.1" fill="#e83026"/><use href="#pn" x="684.4" y="295.4" fill="#e83026"/><use href="#pn" x="701.5" y="295.7" fill="#e83026"/><use href="#pn" x="686.2" y="295.8" fill="#e83026"/><use href="#pn" x="757" y="296" fill="#6aa052"/><use href="#pp" x="694.3" y="296.1" fill="#e83026"/><use href="#pp" x="710.3" y="296.3" fill="#e83026"/><use href="#pn" x="679.7" y="296.5" fill="#e83026"/><use href="#pn" x="749.8" y="296.6" fill="#e83026"/><use href="#pp" x="716.3" y="297.5" fill="#6aa052"/><use href="#pp" x="702.3" y="297.8" fill="#e83026"/><use href="#pn" x="688.6" y="298" fill="#6aa052"/><use href="#pn" x="678.5" y="298.1" fill="#e83026"/><use href="#pn" x="658.6" y="298.3" fill="#e83026"/><use href="#pn" x="775.3" y="298.3" fill="#e83026"/><use href="#pn" x="711" y="298.3" fill="#e83026"/><use href="#pp" x="696.3" y="298.4" fill="#e83026"/><use href="#pn" x="690.5" y="298.7" fill="#e83026"/><use href="#pp" x="700.9" y="298.9" fill="#e83026"/><use href="#pn" x="684.8" y="298.9" fill="#e83026"/><use href="#pp" x="726.2" y="299.1" fill="#e83026"/><use href="#pn" x="692" y="299.1" fill="#e83026"/><use href="#pn" x="700.4" y="299.8" fill="#e83026"/><use href="#pn" x="742" y="300" fill="#e83026"/><use href="#pn" x="770" y="300" fill="#e83026"/><use href="#pn" x="737" y="300" fill="#e83026"/><use href="#pp" x="710.4" y="300" fill="#e83026"/><use href="#pn" x="675.9" y="300.1" fill="#e83026"/><use href="#pp" x="733.7" y="300.2" fill="#e83026"/><use href="#pp" x="709.4" y="300.2" fill="#e83026"/><use href="#pn" x="671.1" y="300.3" fill="#e83026"/><use href="#pp" x="680.5" y="300.4" fill="#e83026"/><use href="#pp" x="705.7" y="300.7" fill="#e83026"/><use href="#pn" x="718.4" y="300.8" fill="#e83026"/><use href="#pn" x="679" y="300.8" fill="#e83026"/><use href="#pp" x="689" y="300.9" fill="#e83026"/><use href="#pn" x="756.9" y="301" fill="#6aa052"/><use href="#pp" x="686.1" y="301.1" fill="#6aa052"/><use href="#pn" x="666" y="301.4" fill="#e83026"/><use href="#pn" x="670.7" y="301.4" fill="#e83026"/><use href="#pn" x="728.9" y="301.5" fill="#e83026"/><use href="#pp" x="716.2" y="301.8" fill="#e83026"/><use href="#pp" x="696.5" y="301.8" fill="#e83026"/><use href="#pn" x="752" y="302" fill="#e83026"/><use href="#pp" x="685.6" y="302" fill="#6aa052"/><use href="#pp" x="733.2" y="302.1" fill="#e83026"/><use href="#pn" x="664.7" y="302.5" fill="#e83026"/><use href="#pn" x="707.7" y="302.7" fill="#6aa052"/><use href="#pp" x="694.2" y="302.8" fill="#e83026"/><use href="#pp" x="693.7" y="302.8" fill="#e83026"/><use href="#pp" x="689.4" y="303" fill="#6aa052"/><use href="#pn" x="689.4" y="303.2" fill="#e83026"/><use href="#pn" x="715" y="303.3" fill="#e83026"/><use href="#pn" x="709.6" y="303.4" fill="#e83026"/><use href="#pn" x="725.1" y="303.4" fill="#e83026"/><use href="#pn" x="680.1" y="303.4" fill="#e83026"/><use href="#pp" x="716.9" y="303.4" fill="#e83026"/><use href="#pn" x="683.9" y="303.5" fill="#6aa052"/><use href="#pp" x="685.4" y="303.9" fill="#e83026"/><use href="#pp" x="705.4" y="304" fill="#e83026"/><use href="#pp" x="678.8" y="304.1" fill="#e83026"/><use href="#pp" x="698.4" y="304.2" fill="#e83026"/><use href="#pp" x="722.9" y="304.2" fill="#e83026"/><use href="#pp" x="722.6" y="304.2" fill="#e83026"/><use href="#pp" x="719.4" y="304.3" fill="#e83026"/><use href="#pp" x="719.4" y="304.4" fill="#e83026"/><use href="#pn" x="716.4" y="304.5" fill="#e83026"/><use href="#pn" x="726.1" y="304.6" fill="#e83026"/><use href="#pn" x="714.1" y="304.6" fill="#e83026"/><use href="#pn" x="741" y="305" fill="#e83026"/><use href="#pn" x="715.7" y="305" fill="#e83026"/><use href="#pn" x="693.5" y="305" fill="#e83026"/><use href="#pn" x="698.9" y="305" fill="#e83026"/><use href="#pp" x="725.9" y="305" fill="#e83026"/><use href="#pp" x="679.4" y="305.1" fill="#e83026"/><use href="#pp" x="705.9" y="305.4" fill="#e83026"/><use href="#pp" x="728.5" y="305.5" fill="#e83026"/><use href="#pp" x="726.4" y="305.5" fill="#e83026"/><use href="#pp" x="713.8" y="305.7" fill="#e83026"/><use href="#pp" x="712.8" y="305.8" fill="#e83026"/><use href="#pn" x="689.9" y="305.9" fill="#e83026"/><use href="#pn" x="744.9" y="306.1" fill="#e83026"/><use href="#pn" x="769.2" y="306.2" fill="#6aa052"/><use href="#pp" x="716.3" y="306.2" fill="#e83026"/><use href="#pp" x="678.9" y="306.5" fill="#e83026"/><use href="#pp" x="714.5" y="306.6" fill="#e83026"/><use href="#pn" x="742.9" y="306.8" fill="#6aa052"/><use href="#pp" x="709.4" y="306.8" fill="#e83026"/><use href="#pn" x="733.3" y="306.9" fill="#e83026"/><use href="#pp" x="720" y="306.9" fill="#e83026"/><use href="#pp" x="689" y="306.9" fill="#e83026"/><use href="#pp" x="718.9" y="307" fill="#e83026"/><use href="#pn" x="713.9" y="307.1" fill="#e83026"/><use href="#pp" x="665.8" y="307.3" fill="#e83026"/><use href="#pp" x="723.3" y="307.4" fill="#e83026"/><use href="#pp" x="692.6" y="307.4" fill="#e83026"/><use href="#pp" x="690.6" y="307.5" fill="#e83026"/><use href="#pn" x="665.3" y="307.7" fill="#e83026"/><use href="#pp" x="716.1" y="307.7" fill="#e83026"/><use href="#pn" x="712" y="307.7" fill="#e83026"/><use href="#pp" x="738.2" y="307.8" fill="#6aa052"/><use href="#pp" x="734.2" y="307.8" fill="#e83026"/><use href="#pp" x="726.5" y="307.9" fill="#e83026"/><use href="#pn" x="698" y="308" fill="#e83026"/><use href="#pp" x="708.4" y="308.1" fill="#e83026"/><use href="#pn" x="737.1" y="308.2" fill="#e83026"/><use href="#pp" x="733" y="308.3" fill="#6aa052"/><use href="#pp" x="707" y="308.4" fill="#e83026"/><use href="#pn" x="702.3" y="308.5" fill="#e83026"/><use href="#pn" x="702.2" y="308.5" fill="#e83026"/><use href="#pn" x="681.8" y="308.5" fill="#6aa052"/><use href="#pn" x="661.7" y="308.6" fill="#e83026"/><use href="#pn" x="770" y="308.9" fill="#e83026"/><use href="#pn" x="728.5" y="309.2" fill="#e83026"/><use href="#pp" x="735.7" y="309.3" fill="#e83026"/><use href="#pp" x="725.2" y="309.3" fill="#e83026"/><use href="#pp" x="729.6" y="309.4" fill="#e83026"/><use href="#pn" x="667.7" y="309.6" fill="#e83026"/><use href="#pp" x="732.6" y="309.6" fill="#e83026"/><use href="#pn" x="683.7" y="309.7" fill="#e83026"/><use href="#pn" x="711" y="309.8" fill="#e83026"/><use href="#pp" x="721.9" y="309.9" fill="#e83026"/><use href="#pp" x="714.6" y="309.9" fill="#e83026"/><use href="#pp" x="738.8" y="309.9" fill="#e83026"/><use href="#pp" x="711.5" y="309.9" fill="#e83026"/><use href="#pp" x="706.6" y="310" fill="#e83026"/><use href="#pp" x="702.3" y="310.1" fill="#6aa052"/><use href="#pp" x="707.8" y="310.1" fill="#e83026"/><use href="#pn" x="679.2" y="310.3" fill="#e83026"/><use href="#pn" x="741.2" y="310.3" fill="#e83026"/><use href="#pp" x="703.2" y="310.4" fill="#e83026"/><use href="#pp" x="738.9" y="310.4" fill="#e83026"/><use href="#pn" x="740.2" y="310.5" fill="#e83026"/><use href="#pp" x="700.2" y="310.5" fill="#e83026"/><use href="#pp" x="729.5" y="310.5" fill="#e83026"/><use href="#pp" x="712.4" y="310.6" fill="#e83026"/><use href="#pp" x="730.3" y="310.7" fill="#e83026"/><use href="#pn" x="730.8" y="310.7" fill="#e83026"/><use href="#pn" x="723.8" y="311" fill="#e83026"/><use href="#pp" x="688.9" y="311.1" fill="#6aa052"/><use href="#pp" x="678.1" y="311.3" fill="#e83026"/><use href="#pp" x="704.3" y="311.3" fill="#e83026"/><use href="#pn" x="721.6" y="311.4" fill="#e83026"/><use href="#pn" x="716.8" y="311.4" fill="#6aa052"/><use href="#pn" x="761.3" y="311.5" fill="#e83026"/><use href="#pn" x="671.5" y="311.5" fill="#6aa052"/><use href="#pp" x="698.9" y="311.5" fill="#e83026"/><use href="#pn" x="722" y="311.5" fill="#e83026"/><use href="#pp" x="706.9" y="311.5" fill="#e83026"/><use href="#pn" x="692.4" y="311.6" fill="#e83026"/><use href="#pp" x="684.8" y="311.7" fill="#e83026"/><use href="#pn" x="690" y="311.8" fill="#e83026"/><use href="#pp" x="675.8" y="311.9" fill="#6aa052"/><use href="#pn" x="762" y="312" fill="#e83026"/><use href="#pp" x="682.3" y="312" fill="#e83026"/><use href="#pp" x="728.7" y="312.1" fill="#e83026"/><use href="#pp" x="697.7" y="312.1" fill="#e83026"/><use href="#pp" x="682.1" y="312.1" fill="#e83026"/><use href="#pn" x="701.6" y="312.4" fill="#e83026"/><use href="#pp" x="698.8" y="312.4" fill="#6aa052"/><use href="#pn" x="725.6" y="312.4" fill="#e83026"/><use href="#pp" x="731" y="312.4" fill="#e83026"/><use href="#pp" x="705.4" y="312.5" fill="#e83026"/><use href="#pp" x="698" y="312.7" fill="#6aa052"/><use href="#pn" x="716.1" y="312.9" fill="#e83026"/><use href="#pn" x="695.2" y="313" fill="#e83026"/><use href="#pn" x="735.3" y="313.2" fill="#e83026"/><use href="#pn" x="752.5" y="313.3" fill="#e83026"/><use href="#pn" x="680.1" y="313.4" fill="#e83026"/><use href="#pp" x="702.8" y="313.4" fill="#e83026"/><use href="#pp" x="702.8" y="313.5" fill="#e83026"/><use href="#pp" x="731" y="313.6" fill="#e83026"/><use href="#pn" x="679" y="313.7" fill="#e83026"/><use href="#pp" x="679.4" y="313.7" fill="#e83026"/><use href="#pp" x="698.2" y="313.9" fill="#e83026"/><use href="#pp" x="693.4" y="314.1" fill="#e83026"/><use href="#pp" x="691.8" y="314.2" fill="#e83026"/><use href="#pp" x="711.9" y="314.2" fill="#e83026"/><use href="#pp" x="729.3" y="314.5" fill="#e83026"/><use href="#pn" x="729.3" y="314.6" fill="#6aa052"/><use href="#pp" x="686.3" y="314.6" fill="#e83026"/><use href="#pn" x="708.5" y="314.7" fill="#e83026"/><use href="#pn" x="696.7" y="314.9" fill="#e83026"/><use href="#pp" x="714.5" y="315" fill="#e83026"/><use href="#pn" x="745.9" y="315.1" fill="#6aa052"/><use href="#pn" x="698.4" y="315.2" fill="#e83026"/><use href="#pn" x="742.6" y="315.3" fill="#e83026"/><use href="#pn" x="734.6" y="315.3" fill="#e83026"/><use href="#pp" x="696.8" y="315.6" fill="#e83026"/><use href="#pp" x="684.6" y="315.6" fill="#e83026"/><use href="#pp" x="718.9" y="315.7" fill="#e83026"/><use href="#pn" x="681.3" y="315.7" fill="#e83026"/><use href="#pp" x="714.9" y="315.8" fill="#e83026"/><use href="#pn" x="716" y="315.9" fill="#e83026"/><use href="#pn" x="727" y="315.9" fill="#e83026"/><use href="#pn" x="748" y="316" fill="#e83026"/><use href="#pn" x="770" y="316" fill="#e83026"/><use href="#pn" x="690.9" y="316" fill="#e83026"/><use href="#pp" x="711.4" y="316" fill="#e83026"/><use href="#pp" x="732.9" y="316.1" fill="#6aa052"/><use href="#pn" x="707.7" y="316.2" fill="#e83026"/><use href="#pn" x="693.8" y="316.4" fill="#e83026"/><use href="#pp" x="693" y="316.6" fill="#e83026"/><use href="#pp" x="702.8" y="316.6" fill="#e83026"/><use href="#pp" x="739.2" y="316.7" fill="#e83026"/><use href="#pp" x="686" y="317" fill="#e83026"/><use href="#pp" x="689.8" y="317" fill="#e83026"/><use href="#pn" x="698.7" y="317" fill="#6aa052"/><use href="#pn" x="673.1" y="317.1" fill="#e83026"/><use href="#pp" x="736.9" y="317.3" fill="#e83026"/><use href="#pn" x="739.9" y="317.4" fill="#e83026"/><use href="#pn" x="716.6" y="317.4" fill="#6aa052"/><use href="#pp" x="722" y="317.5" fill="#e83026"/><use href="#pn" x="696.3" y="317.6" fill="#e83026"/><use href="#pp" x="684.6" y="317.6" fill="#e83026"/><use href="#pp" x="692.7" y="317.6" fill="#e83026"/><use href="#pn" x="675.5" y="317.7" fill="#e83026"/><use href="#pp" x="739.9" y="317.7" fill="#e83026"/><use href="#pn" x="704.3" y="317.9" fill="#e83026"/><use href="#pn" x="741" y="318" fill="#e83026"/><use href="#pn" x="756" y="318" fill="#e83026"/><use href="#pp" x="738.1" y="318" fill="#e83026"/><use href="#pp" x="680.8" y="318.1" fill="#e83026"/><use href="#pp" x="700.8" y="318.1" fill="#e83026"/><use href="#pp" x="682.1" y="318.3" fill="#e83026"/><use href="#pn" x="734.9" y="318.5" fill="#e83026"/><use href="#pn" x="731.6" y="318.6" fill="#e83026"/><use href="#pp" x="678.1" y="318.6" fill="#e83026"/><use href="#pp" x="714.9" y="318.6" fill="#6aa052"/><use href="#pp" x="709.1" y="318.8" fill="#e83026"/><use href="#pp" x="740.5" y="319.1" fill="#e83026"/><use href="#pp" x="680.6" y="319.1" fill="#e83026"/><use href="#pn" x="691.9" y="319.3" fill="#e83026"/><use href="#pp" x="685" y="319.3" fill="#e83026"/><use href="#pp" x="731" y="319.5" fill="#e83026"/><use href="#pp" x="729.1" y="319.7" fill="#6aa052"/><use href="#pn" x="737.2" y="319.9" fill="#e83026"/><use href="#pn" x="593" y="320" fill="#e83026"/><use href="#pn" x="741.9" y="320.2" fill="#6aa052"/><use href="#pp" x="730.9" y="320.2" fill="#e83026"/><use href="#pp" x="729.2" y="320.2" fill="#e83026"/><use href="#pn" x="722" y="320.3" fill="#e83026"/><use href="#pp" x="728.8" y="320.3" fill="#e83026"/><use href="#pn" x="711" y="320.4" fill="#e83026"/><use href="#pn" x="708.4" y="320.5" fill="#6aa052"/><use href="#pp" x="693.6" y="320.5" fill="#e83026"/><use href="#pp" x="712.2" y="320.6" fill="#e83026"/><use href="#pp" x="728.6" y="320.8" fill="#e83026"/><use href="#pn" x="675.8" y="320.9" fill="#e83026"/><use href="#pp" x="712.6" y="321.1" fill="#e83026"/><use href="#pn" x="724.1" y="321.2" fill="#e83026"/><use href="#pp" x="699.7" y="321.3" fill="#e83026"/><use href="#pn" x="694.6" y="321.4" fill="#e83026"/><use href="#pp" x="701.9" y="321.5" fill="#6aa052"/><use href="#pn" x="676.4" y="321.6" fill="#e83026"/><use href="#pn" x="732.5" y="321.7" fill="#6aa052"/><use href="#pn" x="719.5" y="321.8" fill="#e83026"/><use href="#pp" x="710" y="321.9" fill="#e83026"/><use href="#pn" x="737" y="322" fill="#e83026"/><use href="#pn" x="687.4" y="322.2" fill="#e83026"/><use href="#pp" x="739.1" y="322.2" fill="#e83026"/><use href="#pn" x="682.6" y="322.3" fill="#e83026"/><use href="#pp" x="713.4" y="322.3" fill="#e83026"/><use href="#pp" x="729.8" y="322.3" fill="#e83026"/><use href="#pp" x="696.6" y="322.5" fill="#e83026"/><use href="#pn" x="714.2" y="322.9" fill="#e83026"/><use href="#pp" x="689.8" y="323" fill="#e83026"/><use href="#pp" x="729.3" y="323" fill="#e83026"/><use href="#pn" x="680.5" y="323.1" fill="#6aa052"/><use href="#pp" x="671.2" y="323.2" fill="#e83026"/><use href="#pn" x="720.1" y="323.2" fill="#e83026"/><use href="#pn" x="720.7" y="323.3" fill="#e83026"/><use href="#pn" x="676.2" y="323.3" fill="#e83026"/><use href="#pn" x="680" y="323.4" fill="#6aa052"/><use href="#pn" x="702.5" y="323.5" fill="#e83026"/><use href="#pn" x="697.5" y="323.7" fill="#e83026"/><use href="#pp" x="740.6" y="323.8" fill="#6aa052"/><use href="#pp" x="739.6" y="323.8" fill="#e83026"/><use href="#pp" x="709.2" y="323.9" fill="#e83026"/><use href="#pp" x="709.7" y="324" fill="#e83026"/><use href="#pn" x="705.6" y="325" fill="#e83026"/><use href="#pn" x="727.5" y="325.1" fill="#6aa052"/><use href="#pn" x="719.2" y="325.2" fill="#e83026"/><use href="#pn" x="717" y="325.4" fill="#e83026"/><use href="#pp" x="672.5" y="325.4" fill="#e83026"/><use href="#pn" x="729.5" y="272.3" fill="#0b0bff"/></g></g><text x="5.500" y="186.200" font-family="Liberation Sans, Arial, sans-serif" font-size="10.300" font-weight="700" letter-spacing="-0.550" fill="#fff" stroke="#7a7a7a" stroke-width="0.450" stroke-opacity="0.850">Google</text><g font-family="Liberation Sans, Arial, sans-serif"><rect x="5" y="5.600" width="94.300" height="21.600" rx="1.200" fill="#fff" filter="url(#sh)"/><line x1="47.300" y1="5.600" x2="47.300" y2="27.200" stroke="#e6e6e6" stroke-width="0.600"/><text x="26.800" y="20" font-size="9.600" font-weight="700" fill="#111" text-anchor="middle" textLength="24.500" lengthAdjust="spacingAndGlyphs">Mapa</text><text x="74" y="20" font-size="9.600" fill="#565656" text-anchor="middle" textLength="33" lengthAdjust="spacingAndGlyphs">Satélite</text><rect x="330.200" y="5.600" width="21.600" height="21.600" rx="1.200" fill="#fff" filter="url(#sh)"/><path d="M336.300 14.500v-2.800h2.800M342.900 11.700h2.800v2.800M345.700 18.400v2.800h-2.800M339.100 21.200h-2.800v-2.800" fill="none" stroke="#555" stroke-width="1.150"/><circle cx="340.800" cy="127.500" r="10.800" fill="#fff" filter="url(#sh)"/><path d="M338.500 122.700l2.300-2.300 2.300 2.300M338.500 132.300l2.300 2.300 2.300-2.300M336 125.200l-2.300 2.300 2.300 2.300M345.600 125.200l2.300 2.300-2.300 2.300" fill="none" stroke="#666" stroke-width="1.100"/><rect x="330.200" y="155.800" width="21.600" height="21.600" rx="1.200" fill="#fff" filter="url(#sh)"/><g fill="#f5b400" stroke="#d48e00" stroke-width="0.400"><circle cx="341" cy="161" r="2.200"/><path d="M337.500 164.600q3.500-1.600 7 0l.5 5.200h-1.300l-.4 5.200h-1.700l-.6-4.200-.6 4.200h-1.700l-.4-5.200h-1.300z"/></g><rect x="128" y="182.400" width="230" height="8" fill="#f5f8f8" fill-opacity="0.720"/><g font-size="5.300" fill="#111" stroke="#111" stroke-width="0.120"><text x="131" y="188.600" textLength="45.500" lengthAdjust="spacingAndGlyphs">Atalhos do teclado</text><text x="183" y="188.600" textLength="85.500" lengthAdjust="spacingAndGlyphs">Dados cartográficos ©2025 Google</text><text x="275" y="188.600" textLength="18.500" lengthAdjust="spacingAndGlyphs">Termos</text><text x="300" y="188.600" textLength="54.500" lengthAdjust="spacingAndGlyphs">Informar erro no mapa</text></g><g stroke="#fff" stroke-opacity="0.800" stroke-width="0.800"><line x1="179.500" y1="182.400" x2="179.500" y2="191"/><line x1="271.500" y1="182.400" x2="271.500" y2="191"/><line x1="296.800" y1="182.400" x2="296.800" y2="191"/></g></g></svg></div>
  </div>

  <div class="sec" style="top:622.500px;width:287px"><svg viewBox="0 0 23 22" style="width:23px;height:22px;top:5.500px"><path d="M9.600 1.500A10 10 0 1 0 16.670 18.570L9.600 11.500z"/><path d="M11.400 0.400A9.600 9.600 0 0 1 21 10H11.400z"/><path d="M13.100 12.500H22.700A9.600 9.600 0 0 1 19.900 19.300z"/></svg>Distribuição Demográfica</div>

  <div class="card" id="c3" style="left:27px;top:685px;height:300px">
    <div class="ch sm">Identidade de Gênero</div>
    <div class="lbl" style="left:224px;top:102px">Não respondeu: 1,4%</div>
    <div class="conn"></div>
    <div class="hb" style="left:647px;top:100px"><i></i><i></i><i></i></div>
  </div>
  <div class="card" id="c4" style="left:768px;top:685px;height:300px;width:721px">
    <div class="ch sm">Número de Dependentes</div>
    <div class="pie"></div>
    <div class="hb" style="left:646px;top:100px"><i></i><i></i><i></i></div>
  </div>
</div>

<div id="sbt"></div><div id="sb"></div>

<div id="side">
  <div class="top">/nomandato</div>
  <div class="btn">Acessar 360°</div>
<div class="it" style="top:139.7px"><svg class="ic" viewBox="0 0 24 24"><path d="M6.500 17.500V10.500a5.500 5.500 0 0 1 11 0V17.500M4 17.500h16M10.500 20.500h3M12 3V5M4.500 8L6 5.500M19.500 8L18 5.500"/></svg><div class="tx">Notificações</div><div class="badge">2</div></div>
<div class="it" style="top:188.7px"><svg class="ic" viewBox="0 0 24 24"><path d="M4 12v4.500M8.500 7v8.500M13.500 2.500v14.500M3 21.500L8.500 17 13 19.500 21 11.500"/><path d="M17 11.500H21V15.500"/></svg><div class="tx">Analytics</div><svg class="ch" viewBox="0 0 12 12"><path d="M2.500 4.500L6 8l3.500-3.500"/></svg></div>
<div class="it" style="top:237.7px"><svg class="ic" viewBox="0 0 24 24"><path d="M11 3.500C8.500 3 6.500 4.500 6.500 6.500 4.500 7 3.500 9 4.500 11 3 12.500 3.500 15.500 5.500 16.500 5.500 19 8 21 11 20z" fill="#1c2a44"/><path d="M11 8H8M11 12H6.500M11 16H8.500" stroke="#fff" stroke-width="1.200"/><path d="M14 4v16" stroke-width="2"/><path d="M18 6.500v0M18.500 12v0M18 17.500v0" stroke-width="2.600"/></svg><div class="tx">Intelligence</div><svg class="ch" viewBox="0 0 12 12"><path d="M2.500 4.500L6 8l3.500-3.500"/></svg></div>
<div class="it" style="top:286.7px"><svg class="ic" viewBox="0 0 24 24"><path d="M4 15.500L6.500 13M17.500 13L20 15.500V21H4V15.500H20"/><path d="M12.500 2.500l5 5-5.500 6H8.500l-1.500-3z"/><path d="M7 13.500H17"/></svg><div class="tx">Votos 360°</div><svg class="ch" viewBox="0 0 12 12"><path d="M2.500 4.500L6 8l3.500-3.500"/></svg></div>
<div class="it" style="top:335.7px"><svg class="ic" viewBox="0 0 24 24"><circle cx="12" cy="12" r="9.500"/><circle cx="12" cy="12" r="5.500"/><circle cx="12" cy="12" r="2" /></svg><div class="tx">Metas</div><svg class="ch" viewBox="0 0 12 12"><path d="M2.500 4.500L6 8l3.500-3.500"/></svg></div>
<div class="it" style="top:384.7px"><svg class="ic" viewBox="0 0 24 24"><path d="M6 2.500h8l5 5V20a1.500 1.500 0 0 1-1.500 1.500H6A1.500 1.500 0 0 1 4.500 20V4A1.500 1.500 0 0 1 6 2.500z"/><path d="M8.500 13h7M8.500 17h7"/></svg><div class="tx">Conteúdo</div><svg class="ch" viewBox="0 0 12 12"><path d="M2.500 4.500L6 8l3.500-3.500"/></svg></div>
<div class="it" style="top:433.7px"><svg class="ic" viewBox="0 0 24 24"><rect x="2.500" y="4.500" width="19" height="15" rx="1.500"/><path d="M11.500 8.500H8v3.500h3.500V15.500H8M9.750 7.500v1M9.750 15.500v1M16 12v0M16 16v0"/></svg><div class="tx">Cotação</div><svg class="ch" viewBox="0 0 12 12"><path d="M2.500 4.500L6 8l3.500-3.500"/></svg></div>
<div class="it" style="top:482.7px"><svg class="ic" viewBox="0 0 24 24"><rect x="3.500" y="5" width="17" height="16" rx="1.500"/><path d="M3.500 9.500h17M8 2.500V5M16 2.500V5"/><path d="M8 13v0M12 13v0M16 13v0M8 17v0M12 17v0M16 17v0" stroke-width="2.400"/></svg><div class="tx">Agenda</div><svg class="ch" viewBox="0 0 12 12"><path d="M2.500 4.500L6 8l3.500-3.500"/></svg></div>
<div class="it" style="top:531.7px"><svg class="ic" viewBox="0 0 24 24"><path d="M12 20.500H5A1.500 1.500 0 0 1 3.500 19V5A1.500 1.500 0 0 1 5 3.500h13A1.500 1.500 0 0 1 19.500 5v7"/><path d="M7 8h9M7 12h6M7 16h4"/><circle cx="18" cy="18" r="3.500"/><path d="M18 16.500v1.700l1 .8"/></svg><div class="tx">Proposições</div><svg class="ch" viewBox="0 0 12 12"><path d="M2.500 4.500L6 8l3.500-3.500"/></svg></div>
<div class="it" style="top:580.7px"><svg class="ic" viewBox="0 0 24 24"><path d="M6 2.500h8l5 5V20a1.500 1.500 0 0 1-1.500 1.500H6A1.500 1.500 0 0 1 4.500 20V4A1.500 1.500 0 0 1 6 2.500z"/><path d="M8.500 13h7M8.500 17h7"/></svg><div class="tx">Protocolo</div><svg class="ch" viewBox="0 0 12 12"><path d="M2.500 4.500L6 8l3.500-3.500"/></svg></div>
<div class="it" style="top:629.7px"><svg class="ic" viewBox="0 0 24 24"><path d="M3.500 10h4l5-3v10l-5-3h-4zM6 14v4.500h2.500V14"/><path d="M17.500 7.500l2-2M17.500 16.500l2 2M18.500 12h3" stroke-dasharray="1.500 2"/></svg><div class="tx">Denúncias</div><svg class="ch" viewBox="0 0 12 12"><path d="M2.500 4.500L6 8l3.500-3.500"/></svg></div>
<div class="it" style="top:678.7px"><svg class="ic" viewBox="0 0 24 24"><path d="M4 21V13.500A1.500 1.500 0 0 1 5.500 12h13a1.500 1.500 0 0 1 1.500 1.500V21zM2.500 21h19M12 12V8"/><path d="M12 3l1.500 2.200a1.700 1.700 0 1 1-3 0z"/><path d="M4 16.500h16"/></svg><div class="tx">Aniversários</div><svg class="ch" viewBox="0 0 12 12"><path d="M2.500 4.500L6 8l3.500-3.500"/></svg></div>
<div class="it" style="top:727.7px"><svg class="ic" viewBox="0 0 24 24"><path d="M4 14.500A8.500 8.500 0 0 1 12 4a8.500 8.500 0 0 1 8 6"/><path d="M7.500 13.500A5 5 0 0 1 12 7.500a5 5 0 0 1 4.500 3"/><path d="M12 11v6l1.500-1 2 4.500 2-1-2-4.500h2.500z"/></svg><div class="tx">Interações</div><svg class="ch" viewBox="0 0 12 12"><path d="M2.500 4.500L6 8l3.500-3.500"/></svg></div>
<div class="it" style="top:776.7px"><svg class="ic" viewBox="0 0 24 24"><path d="M3 6h1M3 11h1M3 16h1M7 6h13M7 11h13M7 16h5"/><path d="M14.500 17.500l2.500 2.500 4.500-5"/></svg><div class="tx">Pesquisas</div><svg class="ch" viewBox="0 0 12 12"><path d="M2.500 4.500L6 8l3.500-3.500"/></svg></div>
<div class="it" style="top:825.7px"><svg class="ic" viewBox="0 0 24 24"><circle cx="10" cy="6.500" r="3.700"/><path d="M3 20c0-4 3-6 6.500-6"/><path d="M3 20h7"/><circle cx="17.500" cy="17" r="2.600"/><path d="M17.500 12.800v1.600M17.500 19.600v1.600M13.800 15l1.400.8M19.800 18.200l1.400.8M13.800 19l1.400-.8M19.800 15.800l1.400-.8"/></svg><div class="tx">Usuários</div><svg class="ch" viewBox="0 0 12 12"><path d="M2.500 4.500L6 8l3.500-3.500"/></svg></div>
<div class="it" style="top:874.7px"><svg class="ic" viewBox="0 0 24 24"><circle cx="7" cy="6.500" r="2.800"/><path d="M7 2v1.700M7 9.300V11M2.800 4.200l1.500.9M9.700 7.900l1.500.9M2.800 8.800l1.500-.9M9.700 5.100l1.500-.9"/><circle cx="15.500" cy="16" r="4"/><path d="M15.500 9.800V12M15.500 20v2.200M10 13l2 1.100M19 17.900l2 1.100M10 19l2-1.100M19 14.100l2-1.100"/></svg><div class="tx">Configurações</div><svg class="ch" viewBox="0 0 12 12"><path d="M2.500 4.500L6 8l3.500-3.500"/></svg></div>
</div>
<div id="collapse"><svg viewBox="0 0 12 12"><path d="M7.500 2L3.500 6l4 4"/></svg></div>

</div>
</body>
</html>
